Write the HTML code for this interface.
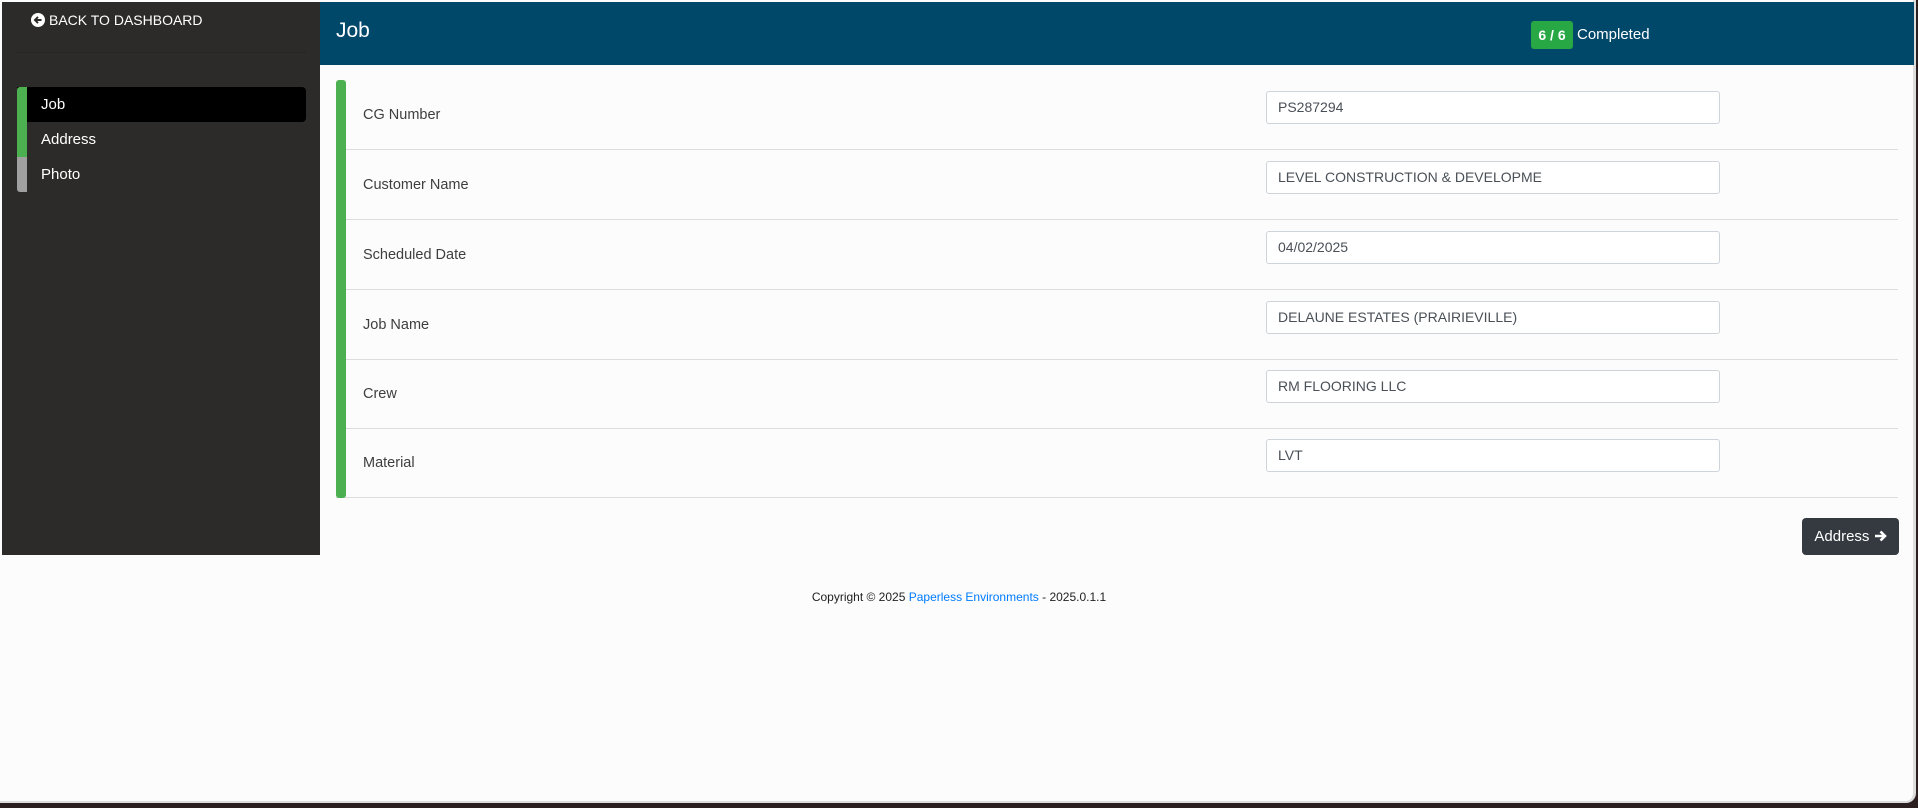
<!DOCTYPE html>
<html><head><meta charset="utf-8"><style>
*{box-sizing:border-box;margin:0;padding:0}
body{width:1918px;height:808px;background:#2b1f1f;font-family:"Liberation Sans",Arial,sans-serif;position:relative;overflow:hidden}
.page{position:absolute;left:0;top:0;width:1916px;height:803px;background:#fcfcfc;border-right:3px solid #ddd;border-bottom:2px solid #ddd;border-radius:0 0 10px 0}
.side{position:absolute;left:2px;top:2px;width:318px;height:553px;background:#2d2b29}
.back{position:absolute;left:29px;top:10px;color:#fff;font-size:14px;display:flex;align-items:center;gap:4px}
.sep{position:absolute;left:15px;top:50px;width:289px;height:1px;background:#262422}
.nav{position:absolute;left:15px;width:289px;height:35px;color:#fff;font-size:15px;line-height:35px;padding-left:24px}
.nav .bar{position:absolute;left:0;top:0;width:10px;height:35px}
.head{position:absolute;left:320px;top:2px;width:1594px;height:63px;background:#00486a}
.head h1{position:absolute;left:16px;top:17px;font-size:21px;font-weight:normal;color:#fff}
.badge{position:absolute;left:1211px;top:19px;width:42px;height:28px;background:#28a745;border-radius:3px;color:#fff;font-size:14px;font-weight:bold;text-align:center;line-height:28px}
.comp{position:absolute;left:1257px;top:19px;line-height:28px;color:#fff;font-size:15px}
.row{position:absolute;left:336px;width:1562px;height:70px;border-bottom:1px solid #dcdcdc}
.row .g{position:absolute;left:0;top:0;width:10px;height:70px;background:#4caf50}
.row .l{position:absolute;left:27px;top:0;line-height:70px;font-size:14.5px;color:#3e3e3e}
.row .i{position:absolute;left:930px;top:11px;width:454px;height:33px;border:1px solid #ced4da;border-radius:3px;background:#fff;font-size:14px;color:#495057;line-height:31px;padding-left:11px}
.btn{position:absolute;left:1802px;top:518px;width:97px;height:37px;background:#343a40;border-radius:4px;color:#fff;font-size:15px;text-align:center;line-height:37px}
.foot{position:absolute;left:0;width:1918px;top:590px;text-align:center;font-size:12px;color:#222}
.foot span{color:#007bff}
</style></head><body>
<div class="page">
<div class="side">
 <div class="back"><svg width="14" height="14" viewBox="0 0 16 16"><circle cx="8" cy="8" r="8" fill="#fff"/><path d="M12 8H5M8 4.5L4.5 8 8 11.5" stroke="#2d2b29" stroke-width="2.2" fill="none"/></svg>BACK TO DASHBOARD</div>
 <div class="sep"></div>
 <div class="nav" style="top:85px;background:#000;border-radius:0 4px 4px 0"><div class="bar" style="background:#4caf50;border-radius:3px 0 0 0"></div>Job</div>
 <div class="nav" style="top:120px"><div class="bar" style="background:#4caf50"></div>Address</div>
 <div class="nav" style="top:155px"><div class="bar" style="background:#a0a0a0;border-radius:0 0 0 3px"></div>Photo</div>
</div>
<div class="head"><h1>Job</h1><div class="badge">6 / 6</div><div class="comp">Completed</div></div>
<div class="row" style="top:80px"><div class="g" style="border-radius:3px 3px 0 0"></div><div class="l">CG Number</div><div class="i">PS287294</div></div>
<div class="row" style="top:150px"><div class="g"></div><div class="l">Customer Name</div><div class="i">LEVEL CONSTRUCTION &amp; DEVELOPME</div></div>
<div class="row" style="top:220px"><div class="g"></div><div class="l">Scheduled Date</div><div class="i">04/02/2025</div></div>
<div class="row" style="top:290px"><div class="g"></div><div class="l">Job Name</div><div class="i">DELAUNE ESTATES (PRAIRIEVILLE)</div></div>
<div class="row" style="top:359px"><div class="g"></div><div class="l">Crew</div><div class="i">RM FLOORING LLC</div></div>
<div class="row" style="top:428px"><div class="g" style="border-radius:0 0 3px 3px"></div><div class="l">Material</div><div class="i">LVT</div></div>
<div class="btn">Address <svg width="13" height="12" viewBox="0 0 13 12" style="vertical-align:-1px"><path d="M1 6H11M6.5 1.5L11 6 6.5 10.5" stroke="#fff" stroke-width="2.6" fill="none"/></svg></div>
<div class="foot">Copyright © 2025 <span>Paperless Environments</span> - 2025.0.1.1</div>
</div>
</body></html>
